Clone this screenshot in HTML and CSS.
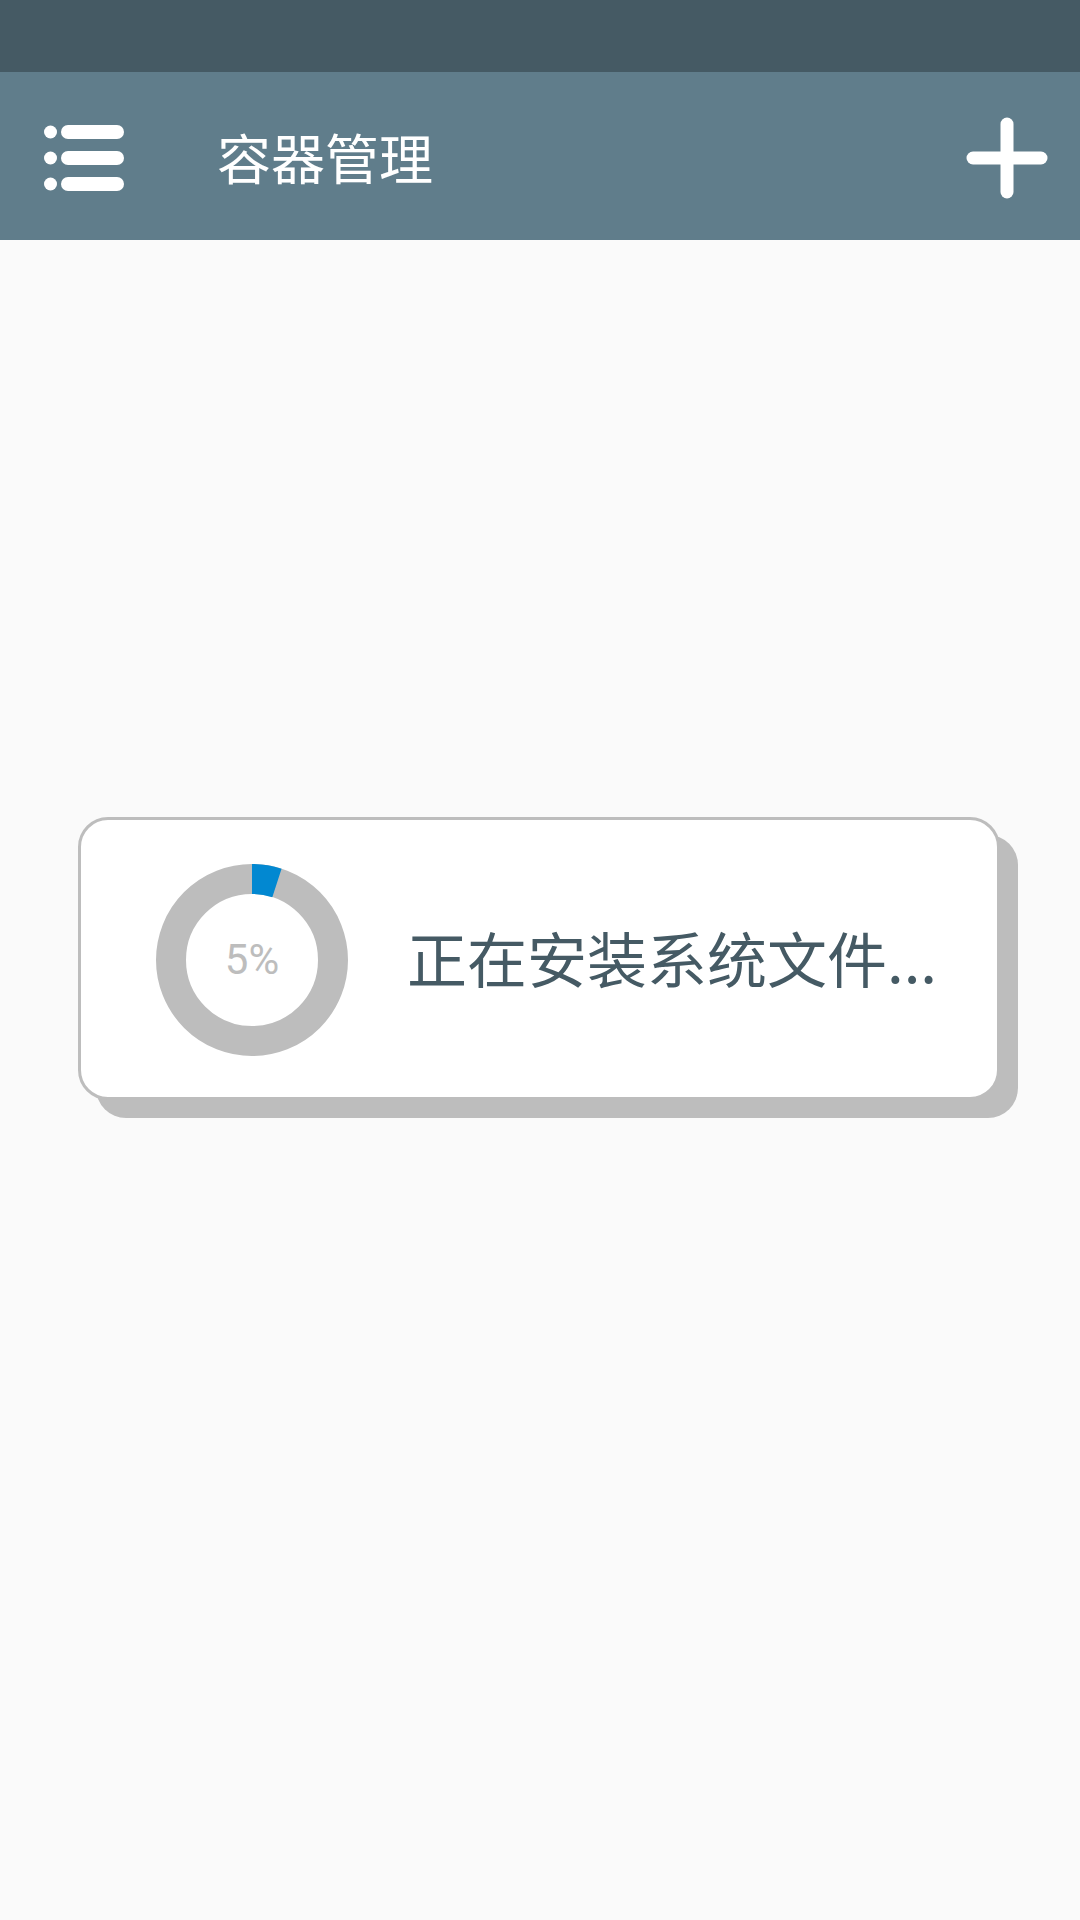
FILE: index.html
```html
<!DOCTYPE html>
<html lang="zh-CN">
<head>
  <meta charset="UTF-8" />
  <title>容器管理</title>
  <link rel="stylesheet" href="styles.css">
</head>
<body>

  <div class="status-bar"></div>

  <header class="app-bar">
    <svg class="menu-icon" width="80" height="66" viewBox="0 0 80 66">
      <circle cx="6.5" cy="7" r="6.5" fill="#fff" />
      <circle cx="6.5" cy="33" r="6.5" fill="#fff" />
      <circle cx="6.5" cy="59" r="6.5" fill="#fff" />
      <rect x="17" y="0" width="63" height="14" rx="7" fill="#fff" />
      <rect x="17" y="26" width="63" height="14" rx="7" fill="#fff" />
      <rect x="17" y="52" width="63" height="14" rx="7" fill="#fff" />
    </svg>
    <h1 class="title">容器管理</h1>
    <svg class="add-icon" width="82" height="82" viewBox="0 0 82 82">
      <line x1="41" y1="7" x2="41" y2="75" stroke="#fff" stroke-width="13" stroke-linecap="round" />
      <line x1="7" y1="41" x2="75" y2="41" stroke="#fff" stroke-width="13" stroke-linecap="round" />
    </svg>
  </header>

  <main class="content">
    <div class="progress-card">
      <div class="ring">
        <svg width="192" height="192" viewBox="0 0 192 192">
          <circle cx="96" cy="96" r="81" fill="none" stroke="#bdbdbd" stroke-width="30" />
          <circle class="ring-value" cx="96" cy="96" r="81" fill="none" stroke="#0288d1" stroke-width="30"
                  stroke-dasharray="25.4 508.9" />
        </svg>
        <span class="ring-label">5%</span>
      </div>
      <p class="progress-text">正在安装系统文件...</p>
    </div>
  </main>

</body>
</html>
```

FILE: styles.css
```css
* {
  box-sizing: border-box;
}

body {
  margin: 0;
  background: #fafafa;
  font-family: "Noto Sans CJK SC", "Noto Sans", sans-serif;
  min-height: 1920px;
}

.status-bar {
  height: 72px;
  background: #455a64;
}

.app-bar {
  height: 168px;
  background: #607d8b;
  display: flex;
  align-items: center;
  padding: 0 32px 0 44px;
}

.menu-icon {
  flex-shrink: 0;
  margin-top: 4px;
}

.title {
  flex: 1;
  margin: 0 0 0 93px;
  color: #ffffff;
  font-size: 54px;
  font-weight: normal;
  line-height: 1;
  padding-top: 2px;
}

.add-icon {
  flex-shrink: 0;
  margin-top: 4px;
}

.content {
  padding: 577px 0 0 78px;
}

.progress-card {
  width: 922px;
  height: 283px;
  background: #ffffff;
  border: 3px solid #bdbdbd;
  border-radius: 30px;
  box-shadow: 18px 18px 0 #bdbdbd;
  display: flex;
  align-items: center;
  padding-left: 75px;
}

.ring {
  display: grid;
  place-items: center;
  width: 192px;
  height: 192px;
  margin-top: 3px;
}

.ring svg,
.ring-label {
  grid-area: 1 / 1;
}

.ring-value {
  transform: rotate(-90deg);
  transform-origin: 96px 96px;
}

.ring-label {
  font-family: Roboto, "Noto Sans", sans-serif;
  font-size: 42px;
  color: #bdbdbd;
  line-height: 1;
}

.progress-text {
  margin: 0 0 4px 59px;
  font-size: 60px;
  color: #455a64;
  line-height: 1;
  white-space: nowrap;
}
```
